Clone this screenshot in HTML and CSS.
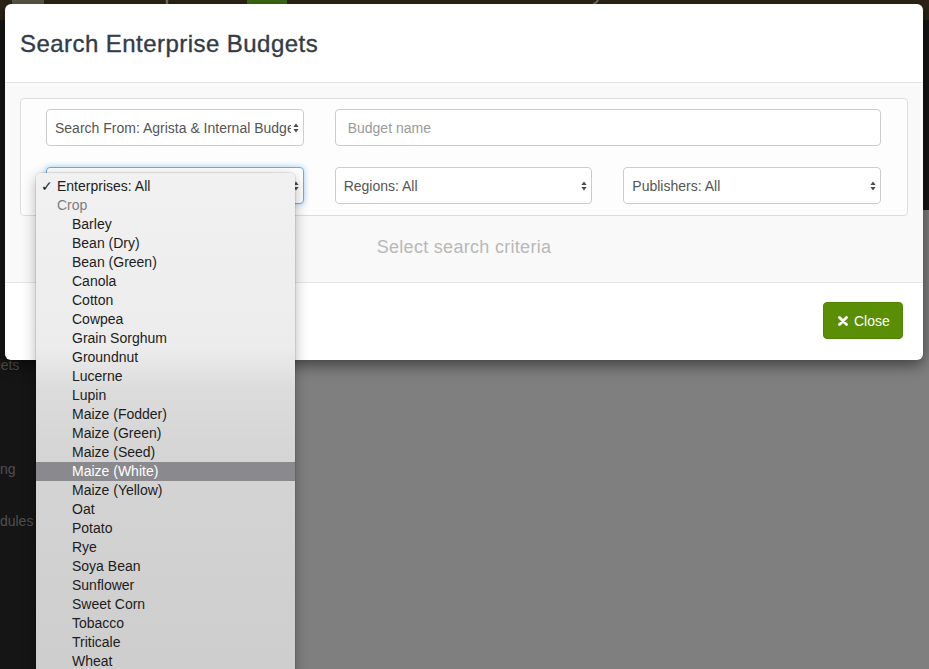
FILE: index.html
```html
<!DOCTYPE html>
<html>
<head>
<meta charset="utf-8">
<title>Search Enterprise Budgets</title>
<link rel="stylesheet" href="styles.css">
</head>
<body>
<div class="page">
  <header class="topbar">
    <div class="topbar-strip">
      <div class="logo"></div>
      <span class="brand">Enterprise</span>
      <span class="badge"></span>
      <span class="budget-title">Lary's Yellow Maize 2018</span>
    </div>
  </header>
  <div class="main">
    <aside class="sidebar">
      <div class="side-item"><span>Budgets</span></div>
      <div class="side-item"><span>All</span></div>
      <div class="side-item"><span>Costing</span></div>
      <div class="side-item"><span>Schedules</span></div>
    </aside>
    <div class="content"></div>
  </div>
</div>

<div class="modal">
  <div class="modal-header">
    <h4 class="modal-title">Search Enterprise Budgets</h4>
  </div>
  <div class="modal-body">
    <div class="panel">
      <div class="select">
        <span class="select-text">Search From: Agrista &amp; Internal Budgets</span>
        <svg class="select-arrow" width="6" height="10" viewBox="0 0 6 10"><path d="M3 0.5L5.6 4H0.4Z M3 9.5L0.4 6H5.6Z" fill="#4a4a4a"/></svg>
      </div>
      <div class="input span-2">Budget name</div>
      <div class="select focused">
        <span class="select-text">Enterprises: All</span>
        <svg class="select-arrow" width="6" height="10" viewBox="0 0 6 10"><path d="M3 0.5L5.6 4H0.4Z M3 9.5L0.4 6H5.6Z" fill="#4a4a4a"/></svg>
      </div>
      <div class="select">
        <span class="select-text">Regions: All</span>
        <svg class="select-arrow" width="6" height="10" viewBox="0 0 6 10"><path d="M3 0.5L5.6 4H0.4Z M3 9.5L0.4 6H5.6Z" fill="#4a4a4a"/></svg>
      </div>
      <div class="select">
        <span class="select-text">Publishers: All</span>
        <svg class="select-arrow" width="6" height="10" viewBox="0 0 6 10"><path d="M3 0.5L5.6 4H0.4Z M3 9.5L0.4 6H5.6Z" fill="#4a4a4a"/></svg>
      </div>
    </div>
    <div class="status">Select search criteria</div>
  </div>
  <div class="modal-footer">
    <button class="btn-close">
      <svg width="10" height="10" viewBox="0 0 10 10"><path d="M1.5 1.5L8.5 8.5M8.5 1.5L1.5 8.5" stroke="#fff" stroke-width="2.8" stroke-linecap="round"/></svg>
      <span>Close</span>
    </button>
  </div>
</div>

<ul class="dropdown">
  <li class="opt top"><span class="check">✓</span>Enterprises: All</li>
  <li class="opt group">Crop</li>
  <li class="opt sub">Barley</li>
  <li class="opt sub">Bean (Dry)</li>
  <li class="opt sub">Bean (Green)</li>
  <li class="opt sub">Canola</li>
  <li class="opt sub">Cotton</li>
  <li class="opt sub">Cowpea</li>
  <li class="opt sub">Grain Sorghum</li>
  <li class="opt sub">Groundnut</li>
  <li class="opt sub">Lucerne</li>
  <li class="opt sub">Lupin</li>
  <li class="opt sub">Maize (Fodder)</li>
  <li class="opt sub">Maize (Green)</li>
  <li class="opt sub">Maize (Seed)</li>
  <li class="opt sub active">Maize (White)</li>
  <li class="opt sub">Maize (Yellow)</li>
  <li class="opt sub">Oat</li>
  <li class="opt sub">Potato</li>
  <li class="opt sub">Rye</li>
  <li class="opt sub">Soya Bean</li>
  <li class="opt sub">Sunflower</li>
  <li class="opt sub">Sweet Corn</li>
  <li class="opt sub">Tobacco</li>
  <li class="opt sub">Triticale</li>
  <li class="opt sub">Wheat</li>
  <li class="opt sub">Vegetables</li>
</ul>
</body>
</html>
```

FILE: styles.css
```css
* { box-sizing: border-box; }

html, body {
  margin: 0;
  padding: 0;
  width: 929px;
  height: 669px;
  overflow: hidden;
  font-family: "Liberation Sans", Arial, sans-serif;
  font-size: 14px;
}

.page {
  height: 669px;
  display: grid;
  grid-template-rows: 210px 1fr;
}

.topbar {
  background: #151515;
  overflow: hidden;
}

.topbar-strip {
  height: 40px;
  background: #2b2416;
  display: flex;
  align-items: flex-start;
  margin-top: -20px;
  color: #77746c;
  font-size: 24px;
  line-height: 24px;
}

.logo {
  width: 32px;
  height: 30px;
  margin-left: 12px;
  background: #5b5745;
}

.brand {
  margin-left: 63px;
}

.badge {
  width: 40px;
  height: 30px;
  margin-left: 31px;
  background: #3d6a12;
}

.budget-title {
  margin-left: 272px;
  font-size: 22px;
  letter-spacing: 0.4px;
}

.main {
  display: flex;
}

.sidebar {
  width: 200px;
  background: #151515;
  padding-top: 129px;
  overflow: hidden;
}

.side-item {
  height: 52px;
  line-height: 52px;
  color: #4f4f4f;
  font-size: 14px;
  white-space: nowrap;
}

.side-item span {
  margin-left: -32px;
}

.content {
  flex: 1;
  background: #7f7f7f;
}

/* Modal */
.modal {
  position: absolute;
  top: 4px;
  left: 5px;
  width: 918px;
  background: #fff;
  border-radius: 6px;
  box-shadow: 0 5px 15px rgba(0, 0, 0, 0.5);
  overflow: hidden;
}

.modal-header {
  padding: 26px 15px 25px;
  border-bottom: 1px solid #e5e5e5;
}

.modal-title {
  margin: 0;
  font-size: 24px;
  line-height: 27px;
  font-weight: normal;
  letter-spacing: 0.45px;
  color: #333b46;
  -webkit-text-stroke: 0.35px #333b46;
}

.modal-body {
  background: #f9f9f9;
  padding: 15px 15px 0;
}

.panel {
  background: #fdfdfd;
  border: 1px solid #dddddd;
  border-radius: 4px;
  padding: 10px 26px 11px 25px;
  display: grid;
  grid-template-columns: repeat(3, minmax(0, 1fr));
  column-gap: 31px;
  row-gap: 21px;
}

.span-2 {
  grid-column: span 2;
}

.select,
.input {
  height: 37px;
  border: 1px solid #cccccc;
  border-radius: 4px;
  background: #fff;
  display: flex;
  align-items: center;
  color: #555;
  font-size: 14px;
  min-width: 0;
}

.select {
  padding: 0 4px 0 8px;
}

.select-text {
  flex: 1;
  min-width: 0;
  overflow: hidden;
  white-space: nowrap;
}

.select-arrow {
  flex: none;
  margin-left: 2px;
}

.select.focused {
  border-color: #66afe9;
  box-shadow: 0 0 6px rgba(102, 175, 233, 0.6);
}

.input {
  padding: 0 12px;
  color: #9a9a9a;
}

.status {
  text-align: center;
  font-size: 18px;
  letter-spacing: 0.3px;
  line-height: 22px;
  color: #b8b8b8;
  padding: 20px 0 24px;
}

.modal-footer {
  border-top: 1px solid #e5e5e5;
  padding: 19px 20px 21px;
  display: flex;
  justify-content: flex-end;
}

.btn-close {
  height: 37px;
  width: 80px;
  border: 1px solid #4f8404;
  border-radius: 4px;
  background: #5a8f05;
  color: #fff;
  font-family: "Liberation Sans", Arial, sans-serif;
  font-size: 14px;
  display: flex;
  align-items: center;
  gap: 6px;
  padding: 0 0 0 14px;
}

/* Native dropdown menu */
.dropdown {
  position: absolute;
  top: 173px;
  left: 36px;
  width: 259px;
  height: 520px;
  margin: 0;
  padding: 4px 0 0;
  list-style: none;
  border-radius: 5px;
  background: linear-gradient(to bottom, #f1f1f1 0, #ececec 175px, #dcdcdc 215px, #d4d4d4 290px, #cdcdcd 100%);
  box-shadow: 0 4px 14px rgba(0, 0, 0, 0.3), 0 0 0 1px rgba(0, 0, 0, 0.08);
  overflow: hidden;
}

.opt {
  height: 19px;
  line-height: 19px;
  font-size: 14px;
  color: #1c1c1c;
  white-space: nowrap;
  position: relative;
}

.opt.top {
  padding-left: 21px;
}

.check {
  position: absolute;
  left: 5px;
  top: 0;
  font-family: "DejaVu Sans", sans-serif;
  font-size: 14px;
}

.opt.group {
  padding-left: 21px;
  color: #7d7d7d;
}

.opt.sub {
  padding-left: 36px;
}

.opt.active {
  background: #8a898e;
  color: #fff;
}
```
